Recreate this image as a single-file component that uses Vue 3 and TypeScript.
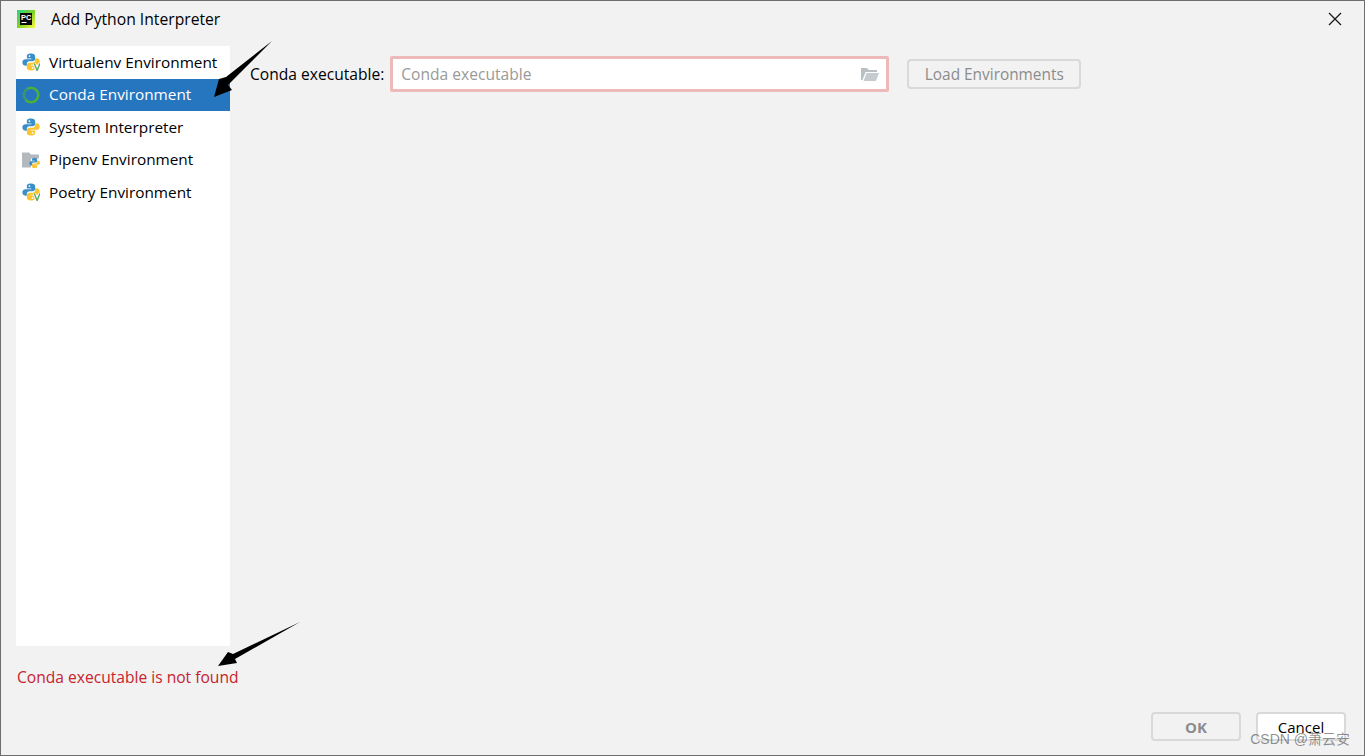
<script setup lang="ts">
interface Env { name: string; icon: 'python' | 'conda' | 'pipenv'; venv?: boolean; selected?: boolean }
const envs: Env[] = [
  { name: 'Virtualenv Environment', icon: 'python', venv: true },
  { name: 'Conda Environment', icon: 'conda', selected: true },
  { name: 'System Interpreter', icon: 'python' },
  { name: 'Pipenv Environment', icon: 'pipenv' },
  { name: 'Poetry Environment', icon: 'python', venv: true },
]
const snake = 'M8 .5C5 .5 4.300 1.700 4.300 3V4.800H8.300V5.500H3C1.300 5.500 .3 6.700 .3 8.300 .3 10 1.300 11.300 3 11.300H4.300V9.500C4.300 8.200 5.300 7.300 6.500 7.300H9.500C10.700 7.300 11.700 6.400 11.700 5.200V3C11.700 1.500 10.500 .5 8 .5Z'
</script>

<template>
  <div class="dialog">
    <header class="title">
      <svg class="logo" viewBox="0 0 18 18" width="18" height="18">
        <defs>
          <linearGradient id="pc" x1="0" y1="0" x2="1" y2="1">
            <stop offset="0" stop-color="#21d789" />
            <stop offset="0.5" stop-color="#7ed321" />
            <stop offset="1" stop-color="#fcf84a" />
          </linearGradient>
        </defs>
        <rect width="18" height="18" fill="url(#pc)" />
        <rect x="3" y="3" width="12" height="12" fill="#0a0a0a" />
        <text x="4" y="10" class="logo-text">PC</text>
        <rect x="4.500" y="12" width="5" height="1" fill="#fff" />
      </svg>
      <span class="title-text">Add Python Interpreter</span>
      <svg class="close" viewBox="0 0 14 14" width="14" height="14">
        <path d="M1 1l12 12M13 1L1 13" stroke="#1a1a1a" stroke-width="1.300" fill="none" />
      </svg>
    </header>

    <div class="body">
      <div class="left">
        <ul class="list">
          <li v-for="e in envs" :key="e.name" class="item" :class="{ selected: e.selected }">
            <svg class="icon" viewBox="0 0 18 18" width="18" height="18">
              <template v-if="e.icon === 'python'">
                <g transform="scale(1.125)">
                  <path :d="snake" fill="#3a8fc9" />
                  <path :d="snake" fill="#fbc531" transform="rotate(180 8 8)" />
                  <circle cx="6.600" cy="2.700" r=".8" fill="#fff" />
                  <circle cx="9.400" cy="13.300" r=".8" fill="#fff" />
                </g>
                <template v-if="e.venv">
                  <path d="M12.300 10.500l2.800 7.500 2.800-7.500" stroke="#fff" stroke-width="3" fill="none" />
                  <path d="M12.300 10.500l2.800 7 2.800-7" stroke="#59a869" stroke-width="1.400" fill="none" />
                </template>
              </template>
              <template v-else-if="e.icon === 'conda'">
                <circle cx="9" cy="9" r="7.300" fill="none" stroke="#4caf3a" stroke-width="2.600" />
                <path d="M3 14A7.300 7.300 0 0 1 5 3" fill="none" stroke="#2675bf" stroke-width="2.800" stroke-dasharray="1 1" />
              </template>
              <template v-else>
                <path d="M0 1.500h7l2 2h8v4H9v9H0z" fill="#b4b9bd" />
                <g transform="translate(7 6.500) scale(.7)">
                  <path :d="snake" fill="#3a8fc9" />
                  <path :d="snake" fill="#fbc531" transform="rotate(180 8 8)" />
                </g>
              </template>
            </svg>
            <span class="item-text">{{ e.name }}</span>
          </li>
        </ul>
        <div class="error">Conda executable is not found</div>
      </div>

      <div class="form">
        <label class="label">Conda executable:</label>
        <div class="field">
          <span class="placeholder">Conda executable</span>
          <svg viewBox="0 0 18 14" width="18" height="14">
            <path d="M0 1h6l1.500 2H16v2H4.500L1.500 13H0z" fill="#b9c0c4" />
            <path d="M5.500 6H18l-3 8H2.500z" fill="#c5cbce" />
          </svg>
        </div>
        <button class="btn load" disabled>Load Environments</button>
      </div>
    </div>

    <footer class="footer">
      <button class="btn ok" disabled>OK</button>
      <button class="btn cancel">Cancel</button>
    </footer>

    <svg class="arrows" viewBox="0 0 1365 756" width="1365" height="756">
      <path d="M272 41L226 77 219 79 214 97 232 90 228 85z" fill="#000" />
      <path d="M300 622L233 654 228 652 218 666 237 663 235 659z" fill="#000" />
    </svg>
    <div class="watermark">CSDN @萧云安</div>
  </div>
</template>

<style>
html, body { margin: 0; background: #f2f2f2; }
</style>

<style scoped>
.dialog {
  position: relative;
  box-sizing: border-box;
  width: 1365px;
  height: 756px;
  overflow: hidden;
  background: #f2f2f2;
  border: 1px solid #6e6e6e;
  font-family: "Open Sans", "Noto Sans", sans-serif;
  font-size: 15.600px;
  color: #000;
  display: flex;
  flex-direction: column;
}
.title {
  height: 35px;
  padding: 0 16px;
  flex: none;
  display: flex;
  align-items: center;
}
.logo { flex: none; }
.logo-text { font-family: "Liberation Sans", sans-serif; font-size: 7.500px; font-weight: 700; fill: #fff; }
.title-text { margin-left: 16px; flex: 1; font-size: 15.700px; }
.close { margin-right: 6px; }
.body {
  flex: 1;
  min-height: 0;
  display: flex;
  padding: 10px 0 0 15px;
}
.left { width: 214px; flex: none; display: flex; flex-direction: column; }
.list {
  list-style: none;
  margin: 0;
  padding: 0;
  height: 600px;
  background: #fff;
}
.item {
  height: 32.500px;
  display: flex;
  align-items: center;
  padding-left: 6px;
  gap: 9px;
  white-space: nowrap;
  font-size: 15.350px;
}
.item-text { padding-bottom: 1px; }
.item.selected { background: #2675bf; color: #fff; }
.icon { flex: none; }
.error { margin: 20px 0 0 1px; color: #c7222d; white-space: nowrap; line-height: 22px; }
.form {
  display: flex;
  align-items: flex-start;
  padding: 10px 0 0 20px;
}
.label { line-height: 36px; white-space: nowrap; }
.field {
  box-sizing: border-box;
  width: 499px;
  height: 36px;
  margin-left: 6px;
  border: 3px solid #eeb9b9;
  border-radius: 2px;
  background: #fff;
  display: flex;
  align-items: center;
  justify-content: space-between;
  padding: 0 7px 0 8px;
}
.placeholder { color: #999; }
.btn {
  font: inherit;
  box-sizing: border-box;
  border: 2px solid #d9d9d9;
  border-radius: 4px;
  background: #f2f2f2;
  padding: 0;
}
.btn:disabled { color: #8c8c8c; }
.load { width: 174px; height: 30px; margin: 3px 0 0 18px; font-size: 15.400px; }
.footer {
  height: 43px;
  flex: none;
  display: flex;
  align-items: flex-start;
  padding-left: 1150px;
  gap: 15px;
}
.ok { width: 90px; height: 29px; font-weight: 700; font-size: 15px; }
.cancel { width: 90px; height: 29px; background: #fff; color: #000; font-size: 15px; }
.arrows { position: absolute; left: -1px; top: -1px; pointer-events: none; }
.watermark {
  position: absolute;
  right: 14px;
  bottom: 7px;
  font-family: "Liberation Sans", "Noto Sans CJK SC", sans-serif;
  font-size: 14px;
  color: rgba(70, 70, 70, .6);
  white-space: nowrap;
}
</style>
